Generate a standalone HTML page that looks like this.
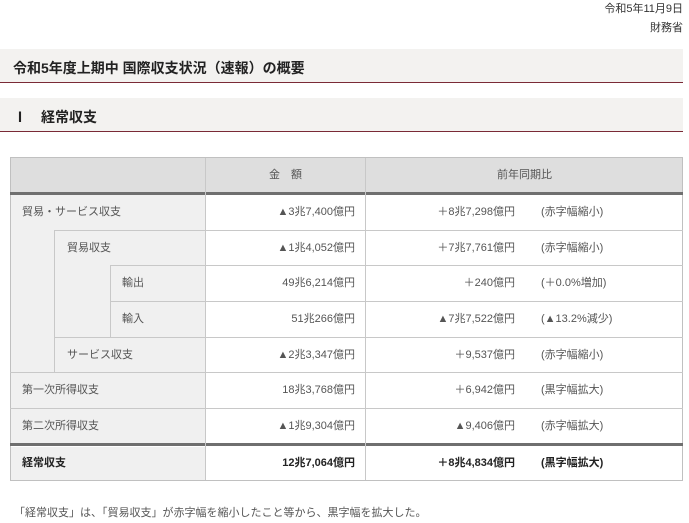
<!DOCTYPE html>
<html><head><meta charset="utf-8"><style>
*{margin:0;padding:0;box-sizing:border-box}
body{width:689px;height:523px;background:#fff;position:relative;overflow:hidden;font-family:"Liberation Sans","Noto Sans CJK JP",sans-serif;color:#333}
.a{position:absolute;white-space:nowrap}
.band{position:absolute;left:0;width:683px;height:34px;background:#f3f2f0;border-bottom:1px solid #7a2a36}
.band span{position:absolute;left:13px;top:9px;font-size:14px;font-weight:bold;color:#222}
.t{font-size:11px;color:#555;line-height:12px}
.r{text-align:right}
.hl{position:absolute;height:1px;background:#c8c8c8}
.vl{position:absolute;width:1px;background:#c8c8c8}
</style></head><body>
<div class="a t" style="right:6px;top:3px;color:#333">令和5年11月9日</div>
<div class="a t" style="right:6px;top:22px;color:#333">財務省</div>
<div class="band" style="top:49px"><span>令和5年度上期中 国際収支状況（速報）の概要</span></div>
<div class="band" style="top:98px"><span>Ⅰ　経常収支</span></div>

<div style="position:absolute;left:10px;top:157px;width:673px;height:324px;border:1px solid #c0c0c0;background:#fff"></div>
<div style="position:absolute;left:11px;top:158px;width:671px;height:35px;background:#dedede"></div>
<div style="position:absolute;left:11px;top:193px;width:194px;height:252px;background:#f0f0f0"></div>
<div style="position:absolute;left:11px;top:447px;width:194px;height:33px;background:#f0f0f0"></div>
<div style="position:absolute;left:10px;top:192px;width:673px;height:3px;background:#6f6f6f"></div>
<div style="position:absolute;left:10px;top:443px;width:673px;height:3px;background:#6f6f6f"></div>
<div class="vl" style="left:205px;top:158px;height:322px"></div>
<div class="vl" style="left:365px;top:158px;height:322px"></div>
<div class="vl" style="left:54px;top:230px;height:142px"></div>
<div class="vl" style="left:110px;top:265px;height:72px"></div>
<div class="hl" style="left:54px;top:230px;width:629px"></div>
<div class="hl" style="left:110px;top:265px;width:573px"></div>
<div class="hl" style="left:110px;top:301px;width:573px"></div>
<div class="hl" style="left:54px;top:337px;width:629px"></div>
<div class="hl" style="left:10px;top:372px;width:673px"></div>
<div class="hl" style="left:10px;top:408px;width:673px"></div>

<div class="a t" style="left:269px;top:169px">金　額</div>
<div class="a t" style="left:497px;top:169px">前年同期比</div>

<div class="a t" style="left:22px;top:206px">貿易・サービス収支</div>
<div class="a t r" style="right:334px;top:206px">▲3兆7,400億円</div>
<div class="a t r" style="right:174px;top:206px">＋8兆7,298億円</div>
<div class="a t" style="left:541px;top:206px">(赤字幅縮小)</div>

<div class="a t" style="left:67px;top:242px">貿易収支</div>
<div class="a t r" style="right:334px;top:242px">▲1兆4,052億円</div>
<div class="a t r" style="right:174px;top:242px">＋7兆7,761億円</div>
<div class="a t" style="left:541px;top:242px">(赤字幅縮小)</div>

<div class="a t" style="left:122px;top:277px">輸出</div>
<div class="a t r" style="right:334px;top:277px">49兆6,214億円</div>
<div class="a t r" style="right:174px;top:277px">＋240億円</div>
<div class="a t" style="left:541px;top:277px">(＋0.0%増加)</div>

<div class="a t" style="left:122px;top:313px">輸入</div>
<div class="a t r" style="right:334px;top:313px">51兆266億円</div>
<div class="a t r" style="right:174px;top:313px">▲7兆7,522億円</div>
<div class="a t" style="left:541px;top:313px">(▲13.2%減少)</div>

<div class="a t" style="left:67px;top:349px">サービス収支</div>
<div class="a t r" style="right:334px;top:349px">▲2兆3,347億円</div>
<div class="a t r" style="right:174px;top:349px">＋9,537億円</div>
<div class="a t" style="left:541px;top:349px">(赤字幅縮小)</div>

<div class="a t" style="left:22px;top:384px">第一次所得収支</div>
<div class="a t r" style="right:334px;top:384px">18兆3,768億円</div>
<div class="a t r" style="right:174px;top:384px">＋6,942億円</div>
<div class="a t" style="left:541px;top:384px">(黒字幅拡大)</div>

<div class="a t" style="left:22px;top:420px">第二次所得収支</div>
<div class="a t r" style="right:334px;top:420px">▲1兆9,304億円</div>
<div class="a t r" style="right:174px;top:420px">▲9,406億円</div>
<div class="a t" style="left:541px;top:420px">(赤字幅拡大)</div>

<div class="a t" style="left:22px;top:457px;font-weight:bold;color:#222">経常収支</div>
<div class="a t r" style="right:334px;top:457px;font-weight:bold;color:#222">12兆7,064億円</div>
<div class="a t r" style="right:174px;top:457px;font-weight:bold;color:#222">＋8兆4,834億円</div>
<div class="a t" style="left:541px;top:457px;font-weight:bold;color:#222">(黒字幅拡大)</div>

<div class="a t" style="left:14px;top:507px">「経常収支」は、「貿易収支」が赤字幅を縮小したこと等から、黒字幅を拡大した。</div>
</body></html>
